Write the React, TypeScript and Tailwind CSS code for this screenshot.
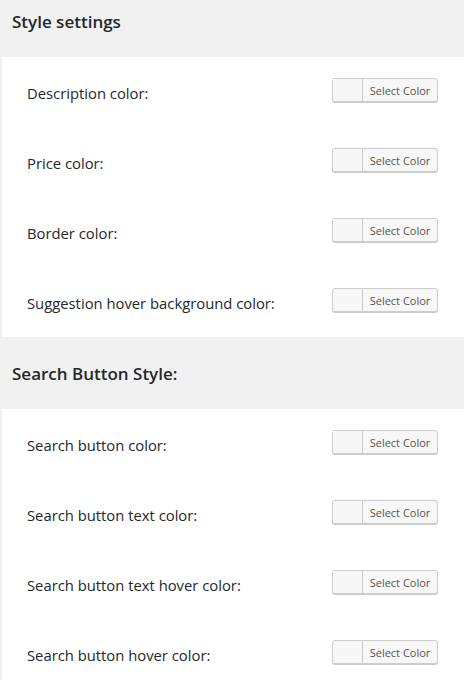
const font = { fontFamily: '"Open Sans", "Noto Sans", sans-serif' };

function ColorButton() {
  return (
    <div className="flex h-[24px] w-[106px] overflow-hidden rounded-[3px] border border-[#cccccc] bg-[#f7f7f7] shadow-[0_1px_0_#cccccc]">
      <span className="h-full w-[30px] border-r border-[#cccccc] bg-[#f7f7f7]" />
      <span className="flex flex-1 items-center justify-center text-[11px] leading-none text-[#555555]">
        Select Color
      </span>
    </div>
  );
}

function Row({ label }: { label: string }) {
  return (
    <div className="flex h-[70px] items-start">
      <div className="ml-[25px] mt-[27px] w-[305px] text-[14.8px] leading-[19px] text-[#23282d]">{label}</div>
      <div className="mt-[21px]">
        <ColorButton />
      </div>
    </div>
  );
}

const styleRows = [
  "Description color:",
  "Price color:",
  "Border color:",
  "Suggestion hover background color:",
];

const buttonRows = [
  "Search button color:",
  "Search button text color:",
  "Search button text hover color:",
  "Search button hover color:",
];

export default function App() {
  return (
    <div className="min-h-[680px] w-[464px] bg-[#f1f1f1]" style={font}>
      <div className="h-[57px] pl-[12px] pt-[11px]">
        <h2 className="text-[17px] font-semibold leading-[22px] text-[#23282d]">Style settings</h2>
      </div>
      <div className="ml-[2px] bg-white">
        {styleRows.map((r) => (
          <Row key={r} label={r} />
        ))}
      </div>
      <div className="flex h-[72px] items-center pl-[12px]">
        <h2 className="mt-[2px] text-[17px] font-semibold leading-[22px] text-[#23282d]">Search Button Style:</h2>
      </div>
      <div className="ml-[2px] bg-white pb-[10px]">
        {buttonRows.map((r) => (
          <Row key={r} label={r} />
        ))}
      </div>
    </div>
  );
}
